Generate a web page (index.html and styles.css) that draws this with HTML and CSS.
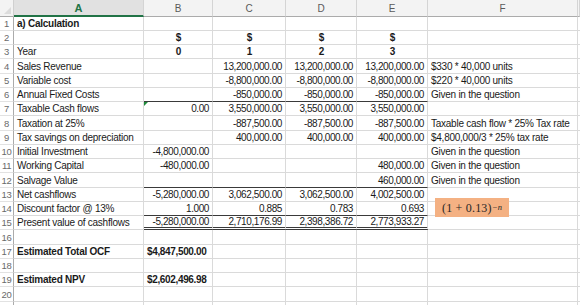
FILE: index.html
```html
<!DOCTYPE html>
<html>
<head>
<meta charset="utf-8">
<link rel="stylesheet" href="styles.css">
</head>
<body>
<div class="sheet">
  <div class="corner"><span class="tri"></span></div>
  <div class="ch sel">A</div>
  <div class="ch">B</div>
  <div class="ch">C</div>
  <div class="ch">D</div>
  <div class="ch">E</div>
  <div class="ch">F</div>
  <div class="ch"></div>

  <div class="rh">1</div><div class="c b">a) Calculation</div><div class="c"></div><div class="c"></div><div class="c"></div><div class="c"></div><div class="c"></div><div class="c"></div>
  <div class="rh">2</div><div class="c"></div><div class="c b ctr">$</div><div class="c b ctr">$</div><div class="c b ctr">$</div><div class="c b ctr">$</div><div class="c"></div><div class="c"></div>
  <div class="rh">3</div><div class="c">Year</div><div class="c b ctr">0</div><div class="c b ctr">1</div><div class="c b ctr">2</div><div class="c b ctr">3</div><div class="c"></div><div class="c"></div>
  <div class="rh">4</div><div class="c">Sales Revenue</div><div class="c"></div><div class="c n">13,200,000.00</div><div class="c n">13,200,000.00</div><div class="c n">13,200,000.00</div><div class="c">$330 * 40,000 units</div><div class="c"></div>
  <div class="rh">5</div><div class="c">Variable cost</div><div class="c"></div><div class="c n">-8,800,000.00</div><div class="c n">-8,800,000.00</div><div class="c n">-8,800,000.00</div><div class="c">$220 * 40,000 units</div><div class="c"></div>
  <div class="rh">6</div><div class="c">Annual Fixed Costs</div><div class="c dk"></div><div class="c n dk">-850,000.00</div><div class="c n dk">-850,000.00</div><div class="c n dk">-850,000.00</div><div class="c">Given in the question</div><div class="c"></div>
  <div class="rh">7</div><div class="c">Taxable Cash flows</div><div class="c n err">0.00</div><div class="c n">3,550,000.00</div><div class="c n">3,550,000.00</div><div class="c n">3,550,000.00</div><div class="c"></div><div class="c"></div>
  <div class="rh">8</div><div class="c">Taxation at 25%</div><div class="c"></div><div class="c n">-887,500.00</div><div class="c n">-887,500.00</div><div class="c n">-887,500.00</div><div class="c">Taxable cash flow * 25% Tax rate</div><div class="c"></div>
  <div class="rh">9</div><div class="c">Tax savings on depreciation</div><div class="c"></div><div class="c n">400,000.00</div><div class="c n">400,000.00</div><div class="c n">400,000.00</div><div class="c">$4,800,000/3 * 25% tax rate</div><div class="c"></div>
  <div class="rh">10</div><div class="c">Initial Investment</div><div class="c n">-4,800,000.00</div><div class="c"></div><div class="c"></div><div class="c"></div><div class="c">Given in the question</div><div class="c"></div>
  <div class="rh">11</div><div class="c">Working Capital</div><div class="c n">-480,000.00</div><div class="c"></div><div class="c"></div><div class="c n">480,000.00</div><div class="c">Given in the question</div><div class="c"></div>
  <div class="rh">12</div><div class="c">Salvage Value</div><div class="c dk"></div><div class="c dk"></div><div class="c dk"></div><div class="c n dk">460,000.00</div><div class="c">Given in the question</div><div class="c"></div>
  <div class="rh">13</div><div class="c">Net cashflows</div><div class="c n">-5,280,000.00</div><div class="c n">3,062,500.00</div><div class="c n">3,062,500.00</div><div class="c n">4,002,500.00</div><div class="c"></div><div class="c"></div>
  <div class="rh">14</div><div class="c">Discount factor @ 13%</div><div class="c n dk">1.000</div><div class="c n dk">0.885</div><div class="c n dk">0.783</div><div class="c n dk">0.693</div><div class="c"></div><div class="c"></div>
  <div class="rh">15</div><div class="c">Present value of cashflows</div><div class="c n dbl">-5,280,000.00</div><div class="c n dbl">2,710,176.99</div><div class="c n dbl">2,398,386.72</div><div class="c n dbl">2,773,933.27</div><div class="c"></div><div class="c"></div>
  <div class="rh">16</div><div class="c"></div><div class="c"></div><div class="c"></div><div class="c"></div><div class="c"></div><div class="c"></div><div class="c"></div>
  <div class="rh">17</div><div class="c b">Estimated Total OCF</div><div class="c b nb">$4,847,500.00</div><div class="c"></div><div class="c"></div><div class="c"></div><div class="c"></div><div class="c"></div>
  <div class="rh">18</div><div class="c"></div><div class="c"></div><div class="c"></div><div class="c"></div><div class="c"></div><div class="c"></div><div class="c"></div>
  <div class="rh">19</div><div class="c b">Estimated NPV</div><div class="c b nb">$2,602,496.98</div><div class="c"></div><div class="c"></div><div class="c"></div><div class="c"></div><div class="c"></div>
  <div class="rh">20</div><div class="c"></div><div class="c"></div><div class="c"></div><div class="c"></div><div class="c"></div><div class="c"></div><div class="c"></div>
  <div class="rh"></div><div class="c"></div><div class="c"></div><div class="c"></div><div class="c"></div><div class="c"></div><div class="c"></div><div class="c"></div>

  <div class="formula">(1 + 0.13)<sup>−<i>n</i></sup></div>
</div>
</body>
</html>
```

FILE: styles.css
```css
html, body {
  margin: 0;
  padding: 0;
  background: #ffffff;
  overflow: hidden;
}
.sheet {
  position: relative;
  display: grid;
  grid-template-columns: 14px 130px 69px 73px 71px 71px 150px 2px;
  grid-template-rows: 16.5px repeat(21, 14.25px);
  width: 580px;
  height: 305px;
  overflow: hidden;
  font-family: "Liberation Sans", Arial, sans-serif;
  font-size: 10px;
  color: #1a1a1a;
}
.corner {
  background: #f3f3f3;
  border-right: 1px solid #d0d0d0;
  border-bottom: 1px solid #ababab;
  display: flex;
  align-items: flex-end;
  justify-content: flex-end;
  padding: 0 2px 2px 0;
  box-sizing: border-box;
}
.tri {
  width: 0;
  height: 0;
  border-left: 7px solid transparent;
  border-bottom: 7px solid #dcdcdc;
}
.ch {
  background: #f3f3f3;
  border-right: 1px solid #d4d4d4;
  border-bottom: 1px solid #ababab;
  color: #5a5a5a;
  display: flex;
  align-items: center;
  justify-content: center;
  box-sizing: border-box;
  font-size: 10px;
  padding-top: 1px;
}
.ch.sel {
  background: #e1e1e1;
  color: #217346;
  font-weight: bold;
  font-size: 11px;
  border-bottom: 2px solid #217346;
}
.rh {
  background: #ffffff;
  border-right: 1px solid #ababab;
  border-bottom: 1px solid #e2e2e2;
  color: #6a6a6a;
  font-size: 9.5px;
  display: flex;
  align-items: flex-end;
  justify-content: center;
  box-sizing: border-box;
  padding-bottom: 1px;
  letter-spacing: -0.4px;
  line-height: 11px;
}
.c {
  border-right: 1px solid #dadada;
  border-bottom: 1px solid #dadada;
  box-sizing: border-box;
  display: flex;
  align-items: flex-end;
  padding: 0 2px 1px 3px;
  white-space: nowrap;
  overflow: visible;
  line-height: 11px;
  letter-spacing: -0.25px;
}
.b { font-weight: bold; }
.ctr { justify-content: center; }
.n {
  justify-content: flex-end;
  letter-spacing: -0.4px;
  padding-right: 3px;
}
.nb {
  letter-spacing: -0.35px;
}
.dk { border-bottom-color: #3a3a3a; }
.dbl { border-bottom: 3px double #3a3a3a; padding-bottom: 0; }
.err { position: relative; }
.err::before {
  content: "";
  position: absolute;
  left: 0;
  top: 0;
  border-top: 4px solid #1e8a3a;
  border-right: 4px solid transparent;
}
.formula {
  position: absolute;
  left: 435px;
  top: 198px;
  width: 74px;
  height: 19px;
  background: #f4b183;
  color: #262626;
  font-family: "Liberation Serif", "DejaVu Serif", serif;
  font-size: 12px;
  display: flex;
  align-items: center;
  box-sizing: border-box;
  padding: 1px 0 0 7px;
  letter-spacing: 0.2px;
}
.formula sup {
  font-size: 8.5px;
  position: relative;
  top: -1px;
  vertical-align: super;
  line-height: 0;
  margin-left: 1px;
}
```
